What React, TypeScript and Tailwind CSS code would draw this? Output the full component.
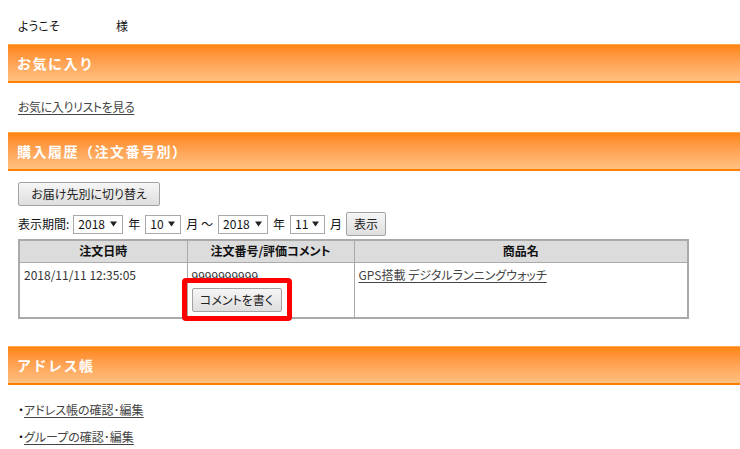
import React from "react";

const Bar = ({ children }: { children: React.ReactNode }) => (
  <div className="h-[39px] border-t border-t-[#ffa850] border-b-2 border-b-[#ff8000] bg-gradient-to-b from-[#ff8508] to-[#ffc080] text-white font-bold text-[14px] tracking-[1.5px] leading-[36px] pl-[9px] [font-feature-settings:normal]">
    {children}
  </div>
);

const Sel = ({ v, w }: { v: string; w: string }) => (
  <div className={`h-[19px] ${w} border border-[#a9a9a9] bg-white flex items-center justify-between pl-[4px] pr-[5px] text-[12px] leading-none`}>
    <span>{v}</span>
    <svg width="7" height="6" viewBox="0 0 7 6"><path d="M0 0.5h7L3.5 5.5z" fill="#222" /></svg>
  </div>
);

const Btn = ({ children, cls }: { children: React.ReactNode; cls?: string }) => (
  <div className={`h-[24px] border border-[#a3a3a3] rounded-[2px] bg-gradient-to-b from-[#f6f6f6] to-[#dedede] flex items-center justify-center text-[12px] text-[#222] ${cls ?? ""}`}>
    {children}
  </div>
);

export default function App() {
  return (
    <div className="w-[740px] h-[449px] overflow-hidden bg-white text-[12px] text-[#111] [font-family:'Noto_Sans_CJK_JP','Noto_Sans',sans-serif] [font-feature-settings:'palt']">
      <div className="pl-2">
        <div className="h-[44px] pt-[18px] leading-4 pl-[10px] flex">
          <span className="w-[98px]">ようこそ</span>
          <span>様</span>
        </div>
        <Bar>お気に入り</Bar>
        <div className="h-[49px] pt-[16px] leading-4 pl-[10px]">
          <span className="underline text-[#444] underline-offset-2 tracking-[-0.4px]">お気に入りリストを見る</span>
        </div>
        <Bar>購入履歴（注文番号別）</Bar>
        <div className="pl-[10px]">
          <div className="mt-[11px] flex">
            <Btn cls="w-[142px]">お届け先別に切り替え</Btn>
          </div>
          <div className="mt-[6px] h-[24px] flex items-center">
            <span className="mr-[4px]">表示期間:</span>
            <Sel v="2018" w="w-[50px]" />
            <span className="mx-[5px]">年</span>
            <Sel v="10" w="w-[36px]" />
            <span className="mx-[5px]">月 ～</span>
            <Sel v="2018" w="w-[50px]" />
            <span className="mx-[5px]">年</span>
            <Sel v="11" w="w-[35px]" />
            <span className="ml-[5px] mr-[4px]">月</span>
            <Btn cls="w-[40px]">表示</Btn>
          </div>
          <table className="mt-[3px] border-collapse border-2 border-[#aaaaaa] w-[671px] table-fixed">
            <thead>
              <tr className="h-[22px] bg-[#dcdcdc]">
                <th className="w-[168px] border border-[#aaaaaa] font-bold text-[12px] leading-4 p-0">注文日時</th>
                <th className="w-[167px] border border-[#aaaaaa] font-bold text-[12px] leading-4 p-0">注文番号/評価コメント</th>
                <th className="border border-[#aaaaaa] font-bold text-[12px] leading-4 p-0">商品名</th>
              </tr>
            </thead>
            <tbody>
              <tr className="align-top">
                <td className="h-[56px] border border-[#aaaaaa] pl-[4px] pt-[4px] text-[#333] leading-4">2018/11/11 12:35:05</td>
                <td className="h-[56px] border border-[#aaaaaa] pl-[4px] pt-[5px] text-[#333] leading-4">
                  <div>9999999999</div>
                  <div className="relative mt-[4px] flex">
                    <Btn cls="w-[90px]">コメントを書く</Btn>
                    <div className="absolute left-[-10px] top-[-10px] w-[110px] h-[43px] border-[5px] border-[#ff0000] rounded-[4px]" />
                  </div>
                </td>
                <td className="h-[56px] border border-[#aaaaaa] pl-[4px] pt-[4px] leading-4">
                  <span className="underline text-[#444] underline-offset-2">GPS搭載 デジタルランニングウォッチ</span>
                </td>
              </tr>
            </tbody>
          </table>
        </div>
        <div className="h-[27px]" />
        <Bar>アドレス帳</Bar>
        <div className="pl-[10px] pt-[17px] leading-4">
          <div>・<span className="underline text-[#444] underline-offset-2">アドレス帳の確認･編集</span></div>
          <div className="mt-[11px]">・<span className="underline text-[#444] underline-offset-2">グループの確認･編集</span></div>
        </div>
      </div>
    </div>
  );
}
